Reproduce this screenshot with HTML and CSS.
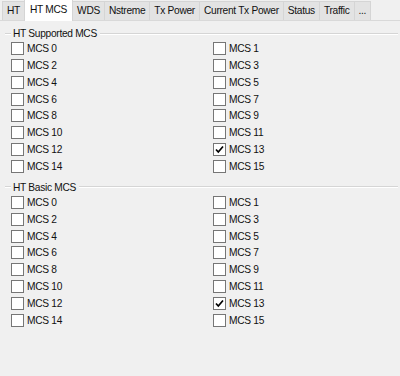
FILE: index.html
```html
<!DOCTYPE html>
<html>
<head>
<meta charset="utf-8">
<link rel="stylesheet" href="styles.css">
</head>
<body>
<div class="window">
  <div class="tabs">
    <div class="tab">HT</div>
    <div class="tab active">HT MCS</div>
    <div class="tab">WDS</div>
    <div class="tab">Nstreme</div>
    <div class="tab">Tx Power</div>
    <div class="tab">Current Tx Power</div>
    <div class="tab">Status</div>
    <div class="tab">Traffic</div>
    <div class="tab">...</div>
  </div>
  <div class="content">
    <div class="group">
      <div class="group-head"><span class="lead"></span><span class="title">HT Supported MCS</span><span class="rule"></span></div>
      <div class="grid">
        <label class="cb"><span class="box"></span>MCS 0</label>
        <label class="cb"><span class="box"></span>MCS 1</label>
        <label class="cb"><span class="box"></span>MCS 2</label>
        <label class="cb"><span class="box"></span>MCS 3</label>
        <label class="cb"><span class="box"></span>MCS 4</label>
        <label class="cb"><span class="box"></span>MCS 5</label>
        <label class="cb"><span class="box"></span>MCS 6</label>
        <label class="cb"><span class="box"></span>MCS 7</label>
        <label class="cb"><span class="box"></span>MCS 8</label>
        <label class="cb"><span class="box"></span>MCS 9</label>
        <label class="cb"><span class="box"></span>MCS 10</label>
        <label class="cb"><span class="box"></span>MCS 11</label>
        <label class="cb"><span class="box"></span>MCS 12</label>
        <label class="cb"><span class="box checked"><svg viewBox="0 0 11 11" width="11" height="11"><path d="M2 5.5 L4.3 8 L9 2.5" fill="none" stroke="#000" stroke-width="1.7"/></svg></span>MCS 13</label>
        <label class="cb"><span class="box"></span>MCS 14</label>
        <label class="cb"><span class="box"></span>MCS 15</label>
      </div>
    </div>
    <div class="group">
      <div class="group-head"><span class="lead"></span><span class="title">HT Basic MCS</span><span class="rule"></span></div>
      <div class="grid">
        <label class="cb"><span class="box"></span>MCS 0</label>
        <label class="cb"><span class="box"></span>MCS 1</label>
        <label class="cb"><span class="box"></span>MCS 2</label>
        <label class="cb"><span class="box"></span>MCS 3</label>
        <label class="cb"><span class="box"></span>MCS 4</label>
        <label class="cb"><span class="box"></span>MCS 5</label>
        <label class="cb"><span class="box"></span>MCS 6</label>
        <label class="cb"><span class="box"></span>MCS 7</label>
        <label class="cb"><span class="box"></span>MCS 8</label>
        <label class="cb"><span class="box"></span>MCS 9</label>
        <label class="cb"><span class="box"></span>MCS 10</label>
        <label class="cb"><span class="box"></span>MCS 11</label>
        <label class="cb"><span class="box"></span>MCS 12</label>
        <label class="cb"><span class="box checked"><svg viewBox="0 0 11 11" width="11" height="11"><path d="M2 5.5 L4.3 8 L9 2.5" fill="none" stroke="#000" stroke-width="1.7"/></svg></span>MCS 13</label>
        <label class="cb"><span class="box"></span>MCS 14</label>
        <label class="cb"><span class="box"></span>MCS 15</label>
      </div>
    </div>
  </div>
</div>
</body>
</html>
```

FILE: styles.css
```css
html, body {
  margin: 0;
  padding: 0;
  background: #f0f0f0;
}
body {
  font-family: "Liberation Sans", Arial, sans-serif;
  font-size: 10.2px;
  letter-spacing: -0.3px;
  color: #111;
}
.window {
  width: 400px;
  height: 376px;
  background: #f0f0f0;
  overflow: hidden;
}
.tabs {
  display: flex;
  align-items: flex-end;
  height: 21px;
  padding-left: 2px;
  background: #f0f0f0;
  border-bottom: 1px solid #d9d9d9;
  box-sizing: border-box;
}
.tab {
  height: 19px;
  line-height: 18px;
  padding: 0 4px;
  background: #e3e3e3;
  border: 1px solid #d5d5d5;
  border-bottom: none;
  margin-right: -1px;
  box-sizing: border-box;
  white-space: nowrap;
}
.tab.active {
  height: 22px;
  line-height: 20px;
  background: #fff;
  position: relative;
  margin-bottom: -1px;
  z-index: 1;
  padding: 0 5px;
}
.content {
  padding-top: 6px;
}
.group-head {
  display: flex;
  align-items: center;
  height: 13px;
  line-height: 13px;
}
.lead {
  width: 6px;
  margin-left: 5px;
  border-top: 1px solid #d5d5d5;
  border-bottom: 1px solid #fff;
}
.title {
  padding: 0 3px 0 2px;
}
.rule {
  flex: 1;
  margin-right: 2px;
  border-top: 1px solid #d5d5d5;
  border-bottom: 1px solid #fff;
}
.grid {
  display: grid;
  grid-template-columns: 202px 1fr;
  grid-auto-rows: 16.86px;
  padding-left: 11px;
  margin-bottom: 6px;
}
.cb {
  display: flex;
  align-items: center;
  white-space: nowrap;
}
.box {
  width: 13px;
  height: 13px;
  box-sizing: border-box;
  border: 1px solid #767676;
  background: #fff;
  margin-right: 3px;
  display: flex;
  align-items: center;
  justify-content: center;
}
.box svg {
  display: block;
}
```
